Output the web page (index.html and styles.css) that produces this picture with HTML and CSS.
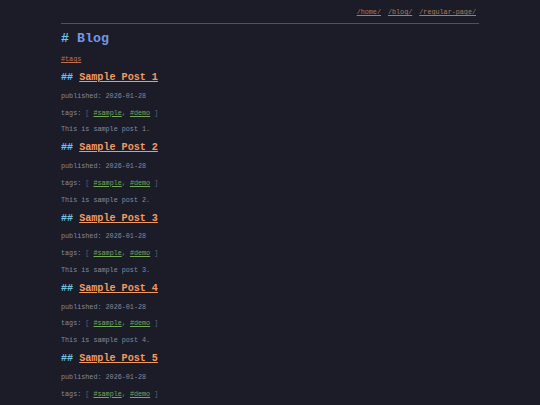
FILE: index.html
```html
<!DOCTYPE html>
<html>
<head>
<meta charset="utf-8">
<link rel="stylesheet" href="styles.css">
</head>
<body>
<div class="page">
  <nav class="nav">
    <a href="#">/home/</a>
    <a href="#">/blog/</a>
    <a href="#">/regular-page/</a>
  </nav>
  <h1 class="title"><span class="mark">#</span> Blog</h1>
  <p class="tagsline"><a href="#" class="taglink">#tags</a></p>

  <div class="post">
    <h2 class="post-title"><span class="mark">##</span> <a href="#">Sample Post 1</a></h2>
    <p class="meta">published: 2026-01-28</p>
    <p class="meta">tags: <span class="br">[</span> <a href="#" class="tag">#sample</a>, <a href="#" class="tag">#demo</a> <span class="br">]</span></p>
    <p class="meta">This is sample post 1.</p>
  </div>
  <div class="post">
    <h2 class="post-title"><span class="mark">##</span> <a href="#">Sample Post 2</a></h2>
    <p class="meta">published: 2026-01-28</p>
    <p class="meta">tags: <span class="br">[</span> <a href="#" class="tag">#sample</a>, <a href="#" class="tag">#demo</a> <span class="br">]</span></p>
    <p class="meta">This is sample post 2.</p>
  </div>
  <div class="post">
    <h2 class="post-title"><span class="mark">##</span> <a href="#">Sample Post 3</a></h2>
    <p class="meta">published: 2026-01-28</p>
    <p class="meta">tags: <span class="br">[</span> <a href="#" class="tag">#sample</a>, <a href="#" class="tag">#demo</a> <span class="br">]</span></p>
    <p class="meta">This is sample post 3.</p>
  </div>
  <div class="post">
    <h2 class="post-title"><span class="mark">##</span> <a href="#">Sample Post 4</a></h2>
    <p class="meta">published: 2026-01-28</p>
    <p class="meta">tags: <span class="br">[</span> <a href="#" class="tag">#sample</a>, <a href="#" class="tag">#demo</a> <span class="br">]</span></p>
    <p class="meta">This is sample post 4.</p>
  </div>
  <div class="post">
    <h2 class="post-title"><span class="mark">##</span> <a href="#">Sample Post 5</a></h2>
    <p class="meta">published: 2026-01-28</p>
    <p class="meta">tags: <span class="br">[</span> <a href="#" class="tag">#sample</a>, <a href="#" class="tag">#demo</a> <span class="br">]</span></p>
    <p class="meta">This is sample post 5.</p>
  </div>
</div>
</body>
</html>
```

FILE: styles.css
```css
html, body {
  margin: 0;
  padding: 0;
  background: #1b1c28;
}
body {
  font-family: "Liberation Mono", "DejaVu Sans Mono", monospace;
  color: #858a9e;
}
.page {
  width: 418px;
  margin: 0 auto;
}
.nav {
  display: flex;
  justify-content: flex-end;
  gap: 7px;
  padding: 8px 3px 6px 0;
  border-bottom: 1px solid #44566e;
  font-size: 6.75px;
  line-height: 9px;
}
.nav a {
  color: #b07a5e;
  text-decoration: underline;
}
.title {
  margin: 7px 0 0;
  font-size: 13.3px;
  line-height: 16px;
  font-weight: bold;
  color: #7398e6;
}
.mark {
  color: #6cc4f0;
}
.tagsline {
  margin: 8px 0 0;
  font-size: 6.75px;
  line-height: 9px;
}
.taglink {
  color: #c0724e;
  text-decoration: underline;
}
.post-title {
  margin: 7px 0 0;
  font-size: 10.1px;
  line-height: 13px;
  font-weight: bold;
}
.post-title a {
  color: #f39a62;
  text-decoration: underline;
}
.meta {
  margin: 7.75px 0 0;
  font-size: 6.75px;
  line-height: 9px;
  color: #858a9e;
}
.br {
  color: #5e6276;
}
.tag {
  color: #74a65a;
  text-decoration: underline;
}
```
